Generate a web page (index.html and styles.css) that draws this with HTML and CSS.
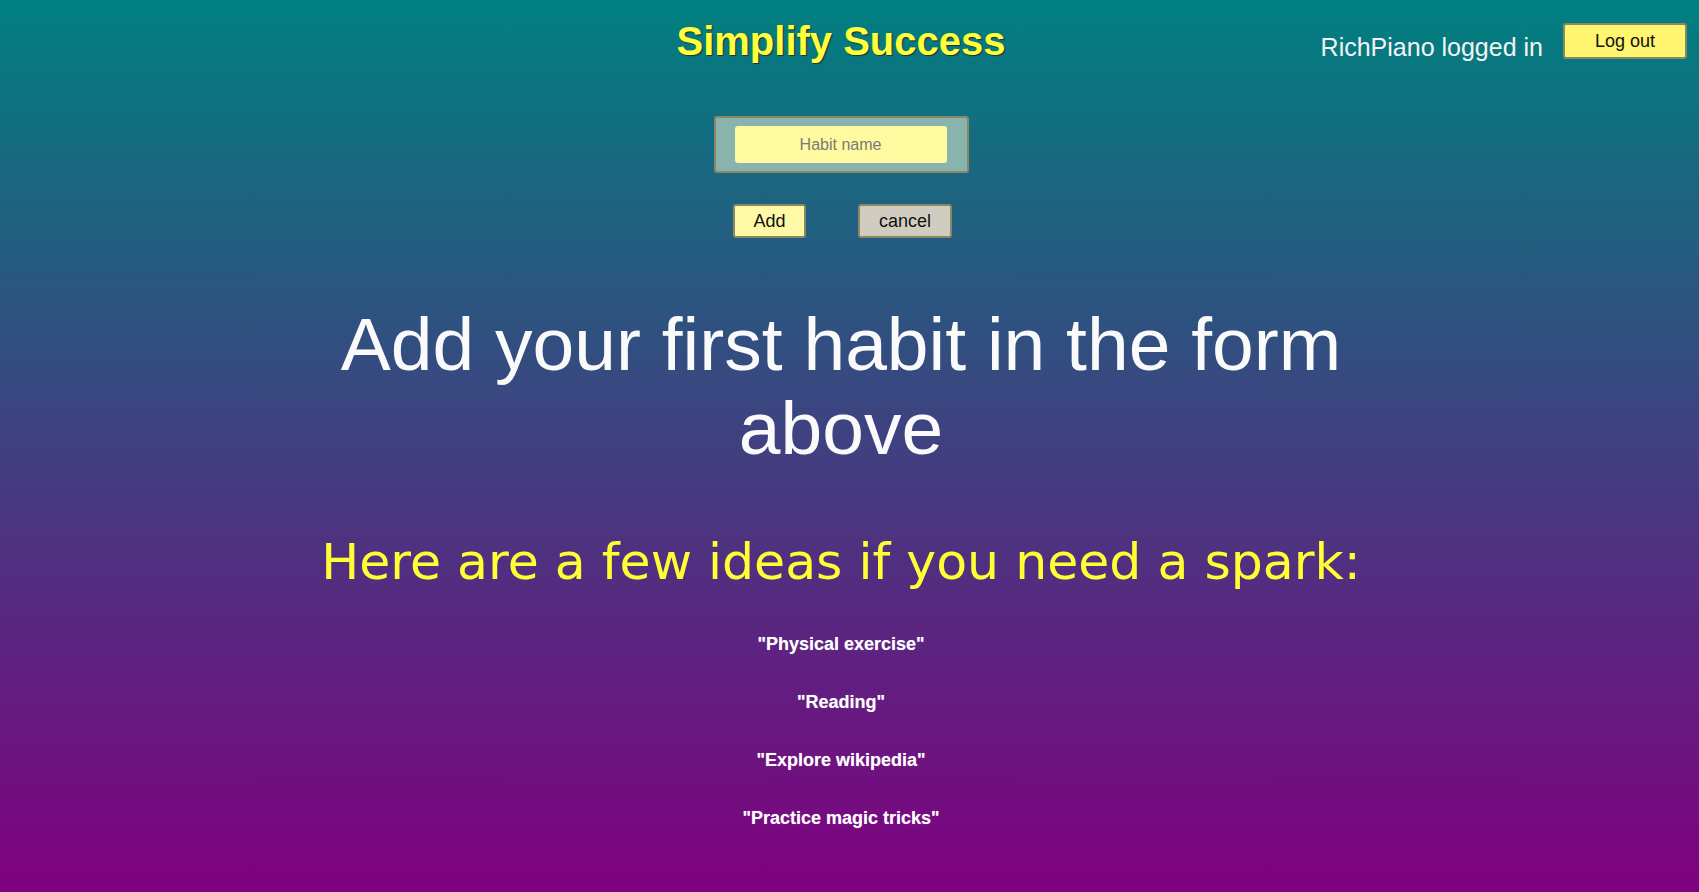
FILE: index.html
```html
<!DOCTYPE html>
<html lang="en">
<head>
<meta charset="utf-8">
<title>Simplify Success</title>
<link rel="stylesheet" href="styles.css">
</head>
<body>
<div class="page">
  <header class="topbar">
    <div class="topbar-spacer"></div>
    <h1 class="brand">Simplify Success</h1>
    <div class="user">
      <span class="user-name">RichPiano logged in</span>
      <button class="btn btn-logout" type="button">Log out</button>
    </div>
  </header>
  <main class="content">
    <form class="habit-form">
      <div class="habit-box">
        <input class="habit-input" type="text" placeholder="Habit name">
      </div>
      <div class="form-actions">
        <button class="btn btn-add" type="button">Add</button>
        <button class="btn btn-cancel" type="button">cancel</button>
      </div>
    </form>
    <h2 class="empty-title">Add your first habit in the form above</h2>
    <h3 class="spark-title">Here are a few ideas if you need a spark:</h3>
    <ul class="ideas">
      <li class="idea">"Physical exercise"</li>
      <li class="idea">"Reading"</li>
      <li class="idea">"Explore wikipedia"</li>
      <li class="idea">"Practice magic tricks"</li>
    </ul>
  </main>
</div>
</body>
</html>
```

FILE: styles.css
```css
html, body {
  margin: 0;
  padding: 0;
  height: 100%;
}

body {
  background: linear-gradient(to bottom, #008080, #800080);
  font-family: "Liberation Sans", Arial, sans-serif;
  color: #ffffff;
  overflow: hidden;
}

.page {
  min-height: 892px;
  padding-right: 17px;
  box-sizing: border-box;
}

.topbar {
  display: grid;
  grid-template-columns: 1fr auto 1fr;
  align-items: start;
}

.brand {
  margin: 19px 0 0;
  font-size: 40px;
  font-weight: bold;
  color: #ffff3c;
  text-shadow: 1px 1px 1px #2a2a2a;
  line-height: normal;
}

.user {
  justify-self: end;
  margin-right: -5px;
  margin-top: 23px;
  display: flex;
  align-items: flex-start;
  gap: 20px;
}

.user-name {
  font-size: 25px;
  color: #f4f4f4;
  margin-top: 10px;
}

.btn {
  font-family: "Liberation Sans", Arial, sans-serif;
  font-size: 18px;
  color: #111;
  border: 2px solid #8b8760;
  border-radius: 3px;
  padding: 0;
  box-sizing: border-box;
  cursor: pointer;
}

.btn-logout {
  width: 124px;
  height: 36px;
  background: #fff56f;
}

.content {
  display: flex;
  flex-direction: column;
  align-items: center;
}

.habit-form {
  margin-top: 52px;
  display: flex;
  flex-direction: column;
  align-items: center;
}

.habit-box {
  background: #89b4ad;
  border: 2px solid #8b8760;
  border-radius: 3px;
  padding: 8px 20px 8px 19px;
}

.habit-input {
  display: block;
  width: 212px;
  height: 37px;
  box-sizing: border-box;
  border: none;
  border-radius: 3px;
  background: #fff9a0;
  font-family: "Liberation Sans", Arial, sans-serif;
  font-size: 16px;
  text-align: center;
  color: #333;
  outline: none;
}

.habit-input::placeholder {
  color: #7a7a7a;
}

.form-actions {
  margin-top: 31px;
  display: flex;
  gap: 52px;
  margin-left: 3px;
}

.btn-add {
  width: 73px;
  height: 34px;
  background: #fff9a5;
}

.btn-cancel {
  width: 94px;
  height: 34px;
  background: #d0cdc0;
}

.empty-title {
  margin: 64px 0 0;
  width: 1100px;
  font-size: 75px;
  line-height: 84px;
  font-weight: normal;
  text-align: center;
  color: #fafafa;
}

.spark-title {
  margin: 62px 0 0;
  font-family: "DejaVu Sans", Verdana, sans-serif;
  font-size: 50.5px;
  font-weight: normal;
  line-height: normal;
  color: #ffff33;
  text-align: center;
}

.ideas {
  list-style: none;
  margin: 43px 0 0;
  padding: 0;
  display: flex;
  flex-direction: column;
  align-items: center;
  gap: 37px;
}

.idea {
  font-size: 18px;
  font-weight: bold;
  line-height: 21px;
  color: #ffffff;
  text-shadow: 0 0 1px rgba(255, 255, 255, 0.4);
}
```
